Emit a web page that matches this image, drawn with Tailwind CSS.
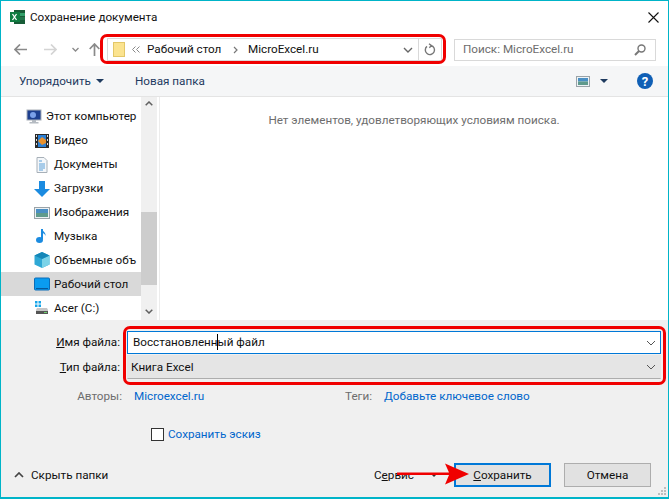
<!DOCTYPE html>
<html lang="ru">
<head>
<meta charset="utf-8">
<script src="https://cdn.jsdelivr.net/npm/@tailwindcss/browser@4"></script>
</head>
<body class="m-0 bg-white">
<div class="relative w-[669px] h-[499px] flex flex-col overflow-hidden border-x border-t border-b-2 border-[#00b4c8] bg-white text-[11.7px] leading-[13px] text-[#111] font-['Roboto','Noto_Sans',sans-serif]">
  <!-- title -->
  <div class="h-[32px] shrink-0 flex items-center pl-[8px] pr-[9px]">
    <svg class="w-[17px] h-[16px] shrink-0" viewBox="0 0 17 16"><rect x="5" y="1" width="11" height="14" fill="#185c37"/><rect x="10" y="4" width="6" height="3" fill="#33a06a"/><rect x="10" y="8" width="6" height="3" fill="#21754a"/><rect x="1" y="3" width="10" height="10" fill="#107c41"/><path d="M3.500 5l4 6M7.500 5l-4 6" stroke="#fff" stroke-width="1.300"/></svg>
    <span class="ml-[4px] text-[#111]">Сохранение документа</span>
    <svg class="ml-auto w-[11px] h-[11px]" viewBox="0 0 11 11"><path d="M.5.5l10 10M10.500.5l-10 10" stroke="#111" stroke-width="1.100" fill="none"/></svg>
  </div>
  <!-- nav -->
  <div class="h-[33px] shrink-0 flex items-center">
    <div class="w-[106px] shrink-0 flex items-center h-full relative">
      <svg class="ml-[13px] w-[13px] h-[11px]" viewBox="0 0 13 11"><path d="M6 .5L1 5.500l5 5M1 5.500h12" stroke="#8a8a8a" stroke-width="1.700" fill="none"/></svg>
      <svg class="ml-[17px] w-[13px] h-[11px]" viewBox="0 0 13 11"><path d="M7 .5l5 5-5 5M12 5.500H0" stroke="#d4d4d4" stroke-width="1.700" fill="none"/></svg>
      <svg class="ml-[15px] w-[7px] h-[5px]" viewBox="0 0 7 5"><path d="M.5 1l3 3 3-3" stroke="#8a8a8a" stroke-width="1.300" fill="none"/></svg>
      <svg class="ml-[10px] w-[11px] h-[13px]" viewBox="0 0 11 13"><path d="M.7 6l4.800-5 4.800 5M5.500 1v12" stroke="#8a8a8a" stroke-width="1.700" fill="none"/></svg>
    </div>
    <div class="w-[335px] h-[23px] shrink-0 border border-[#d9d9d9] flex items-center">
      <div class="w-[12px] h-[15px] ml-[5px] bg-[#fbe38f] border border-[#e3c768]"></div>
      <svg class="ml-[7px] w-[8px] h-[7px]" viewBox="0 0 8 7"><path d="M3.500.5l-3 3 3 3M7.500.5l-3 3 3 3" stroke="#888" fill="none"/></svg>
      <span class="ml-[7px] w-[84px] whitespace-nowrap">Рабочий стол</span>
      <svg class="ml-[2px] w-[5px] h-[8px]" viewBox="0 0 5 8"><path d="M1 1l3 3-3 3" stroke="#777" stroke-width="1.200" fill="none"/></svg>
      <span class="ml-[10px]">MicroExcel.ru</span>
      <svg class="ml-auto w-[10px] h-[6px]" viewBox="0 0 10 6"><path d="M1 1l4 4 4-4" stroke="#666" stroke-width="1.400" fill="none"/></svg>
      <div class="ml-[5px] w-px h-full bg-[#d9d9d9]"></div>
      <svg class="mx-[5px] w-[12px] h-[13px]" viewBox="0 0 12 13"><path d="M7 2.500A4.600 4.600 0 1 1 3 3.400M5 .8L7.500 2.600 5.300 4.700" stroke="#777" stroke-width="1.400" fill="none"/></svg>
    </div>
    <div class="ml-[12px] w-[202px] h-[22px] shrink-0 border border-[#d9d9d9] flex items-center pl-[8px] pr-[9px] text-[#6d6d6d]">
      <span>Поиск: MicroExcel.ru</span>
      <svg class="ml-auto w-[12px] h-[12px]" viewBox="0 0 12 12"><circle cx="7.500" cy="4.500" r="3.500" stroke="#777" stroke-width="1.400" fill="none"/><path d="M5 7l-4 4" stroke="#777" stroke-width="2"/></svg>
    </div>
  </div>
  <!-- toolbar -->
  <div class="h-[31px] shrink-0 bg-[#f5f6f7] border-b border-[#e4e4e4] flex items-center text-[#1e3a5f]">
    <span class="ml-[18px] w-[72px] whitespace-nowrap">Упорядочить</span>
    <svg class="ml-[5px] w-[8px] h-[4px]" viewBox="0 0 8 4"><path d="M0 0h8L4 4z" fill="#1e3a5f"/></svg>
    <span class="ml-[31px]">Новая папка</span>
    <svg class="ml-auto w-[14px] h-[11px]" viewBox="0 0 14 11"><rect x=".5" y=".5" width="13" height="10" fill="#eef3f6" stroke="#9aa3a8"/><rect x="2" y="2" width="10" height="3.500" fill="#4a8fc4"/><rect x="2" y="5.500" width="10" height="3.500" fill="#5f9a8c"/></svg>
    <svg class="ml-[10px] w-[8px] h-[4px]" viewBox="0 0 8 4"><path d="M0 0h8L4 4z" fill="#1e3a5f"/></svg>
    <div class="ml-[29px] mr-[15px] w-[16px] h-[16px] rounded-full bg-[#0f5fb5] flex items-center justify-center text-white font-bold text-[13px]">?</div>
  </div>
  <!-- body -->
  <div class="h-[223px] shrink-0 flex">
    <div class="w-[140px] shrink-0 overflow-hidden flex flex-col pt-[8px]">
      <div class="h-[24px] flex items-center pl-[25px] whitespace-nowrap">
        <svg class="w-[16px] h-[16px] shrink-0" viewBox="0 0 16 16"><rect x="1" y="1" width="14" height="10" fill="#1d3f8f" stroke="#a9b0b8"/><circle cx="7" cy="6" r="3" fill="#7aa0e8"/><path d="M6 11h4v2H6zM3.500 13h9v1.500h-9z" fill="#b5bbc2"/></svg>
        <span class="ml-[4px]">Этот компьютер</span>
      </div>
      <div class="h-[24px] flex items-center pl-[33px] whitespace-nowrap">
        <svg class="w-[16px] h-[16px] shrink-0" viewBox="0 0 16 16"><rect x="1" y="1" width="14" height="14" fill="#2a2a2a"/><path d="M2 2h1v2H2zM2 6h1v2H2zM2 10h1v2H2zM13 2h1v2h-1zM13 6h1v2h-1zM13 10h1v2h-1z" fill="#ddd"/><rect x="4" y="2" width="8" height="12" fill="#2b7fd4"/><path d="M4 8l4-4 4 3v3l-4 2z" fill="#e8912d"/></svg>
        <span class="ml-[4px]">Видео</span>
      </div>
      <div class="h-[24px] flex items-center pl-[33px] whitespace-nowrap">
        <svg class="w-[16px] h-[16px] shrink-0" viewBox="0 0 16 16"><path d="M3 .5h7l3 3v12H3z" fill="#f4f7fa" stroke="#a7b0b8"/><path d="M5 4h3M5 7h6M5 9h6M5 11h6M5 13h4" stroke="#5aa0d8"/></svg>
        <span class="ml-[4px]">Документы</span>
      </div>
      <div class="h-[24px] flex items-center pl-[33px] whitespace-nowrap">
        <svg class="w-[16px] h-[16px] shrink-0" viewBox="0 0 16 16"><path d="M5 0h6v8h5l-8 8-8-8h5z" fill="#1b8be0"/></svg>
        <span class="ml-[4px]">Загрузки</span>
      </div>
      <div class="h-[24px] flex items-center pl-[33px] whitespace-nowrap">
        <svg class="w-[16px] h-[16px] shrink-0" viewBox="0 0 16 16"><rect x=".5" y="2.500" width="15" height="11" fill="#edf1f4" stroke="#9aa3a8"/><rect x="2" y="4" width="12" height="4" fill="#4a8fc4"/><rect x="2" y="8" width="12" height="4" fill="#5f9a8c"/></svg>
        <span class="ml-[4px]">Изображения</span>
      </div>
      <div class="h-[24px] flex items-center pl-[33px] whitespace-nowrap">
        <svg class="w-[16px] h-[16px] shrink-0" viewBox="0 0 16 16"><path d="M8 1v10.500" stroke="#1b8be0" stroke-width="2"/><ellipse cx="5.500" cy="12" rx="3.500" ry="3" fill="#1b8be0"/><path d="M8 1c1 3 4 3 3.500 7-.5-2-2-3-3.500-3z" fill="#1b8be0"/></svg>
        <span class="ml-[4px]">Музыка</span>
      </div>
      <div class="h-[24px] flex items-center pl-[33px] whitespace-nowrap">
        <svg class="w-[16px] h-[16px] shrink-0" viewBox="0 0 16 16"><path d="M8 0l7.500 3.500v9L8 16 .5 12.500v-9z" fill="#2fa8d5"/><path d="M8 7l7.500-3.500v9L8 16z" fill="#7bd3e8"/><path d="M8 0l7.500 3.500L8 7 .5 3.500z" fill="#1587b8"/></svg>
        <span class="ml-[4px]">Объемные объ</span>
      </div>
      <div class="h-[24px] flex items-center pl-[33px] whitespace-nowrap bg-[#d9d9d9]">
        <svg class="w-[16px] h-[16px] shrink-0" viewBox="0 0 16 16"><rect x=".5" y="2" width="15" height="12" rx="1" fill="#0a9cf0" stroke="#0a6db8"/><path d="M2 12.500h12" stroke="#08589a"/></svg>
        <span class="ml-[4px]">Рабочий стол</span>
      </div>
      <div class="h-[24px] flex items-center pl-[33px] whitespace-nowrap">
        <svg class="w-[16px] h-[16px] shrink-0" viewBox="0 0 16 16"><path d="M1 1h2.500v2.500H1zM4.500 1H7v2.500H4.500zM1 4.500h2.500V7H1zM4.500 4.500H7V7H4.500z" fill="#18a5e8"/><path d="M2 10l1-2h10l1 2v4H2z" fill="#c6c6c6"/><rect x="2" y="11" width="12" height="3" fill="#555"/><path d="M10 12.500h3" stroke="#6fd06f"/></svg>
        <span class="ml-[4px]">Acer (C:)</span>
      </div>
    </div>
    <div class="w-[16px] shrink-0 bg-[#f0f0f0] flex flex-col items-center">
      <svg class="mt-[4px] w-[8px] h-[5px] shrink-0" viewBox="0 0 8 5"><path d="M.7 4.300L4 1l3.300 3.300" stroke="#606060" stroke-width="1.500" fill="none"/></svg>
      <div class="mt-[106px] w-full h-[73px] shrink-0 bg-[#cdcdcd]"></div>
      <svg class="mt-[24px] w-[8px] h-[5px] shrink-0" viewBox="0 0 8 5"><path d="M.7.7L4 4 7.300.7" stroke="#606060" stroke-width="1.500" fill="none"/></svg>
    </div>
    <div class="ml-[2px] w-px bg-[#ececec]"></div>
    <div class="flex-1 flex justify-center pt-[17px] text-[#6d6d6d]"><span>Нет элементов, удовлетворяющих условиям поиска.</span></div>
  </div>
  <!-- bottom -->
  <div class="flex-1 bg-[#f0f0f0] flex flex-col">
    <div class="h-[11px] shrink-0"></div>
    <div class="h-[23px] shrink-0 flex items-center">
      <div class="w-[119px] text-right shrink-0"><span class="underline">И</span>мя файла:</div>
      <div class="ml-[7px] w-[534px] h-full border border-[#0078d7] bg-white flex items-center pl-[5px] pr-[4px]">
        <span class="relative">Восстановленный файл<span class="absolute left-[84px] -top-[2px] w-px h-[16px] bg-black"></span></span>
        <svg class="ml-auto w-[10px] h-[6px]" viewBox="0 0 10 6"><path d="M1 1l4 4 4-4" stroke="#555" fill="none"/></svg>
      </div>
    </div>
    <div class="h-[24px] shrink-0 flex items-center mt-[1px]">
      <div class="w-[119px] text-right shrink-0"><span class="underline">Т</span>ип файла:</div>
      <div class="ml-[7px] w-[534px] h-full border border-[#adadad] border-t-[#e5e5e5] border-x-[#e5e5e5] bg-[#e5e5e5] flex items-center pl-[3px] pr-[4px]">
        <span>Книга Excel</span>
        <svg class="ml-auto w-[10px] h-[6px]" viewBox="0 0 10 6"><path d="M1 1l4 4 4-4" stroke="#555" fill="none"/></svg>
      </div>
    </div>
    <div class="h-[17px] shrink-0 mt-[9px] flex items-center">
      <div class="w-[121px] text-right shrink-0 text-[#6d6d6d]">Авторы:</div>
      <a class="ml-[12px] w-[211px] text-[#0066cc]">Microexcel.ru</a>
      <span class="w-[39px] text-[#6d6d6d]">Теги:</span>
      <a class="text-[#0066cc]">Добавьте ключевое слово</a>
    </div>
    <div class="h-[14px] shrink-0 mt-[22px] flex items-center pl-[150px]">
      <div class="w-[13px] h-[13px] border border-[#333] bg-white"></div>
      <span class="ml-[4px] text-[#0066cc]">Сохранить эскиз</span>
    </div>
    <div class="h-[24px] shrink-0 mt-[22px] flex items-center">
      <svg class="ml-[13px] w-[10px] h-[6px]" viewBox="0 0 10 6"><path d="M1 5l4-4 4 4" stroke="#444" stroke-width="1.700" fill="none"/></svg>
      <span class="ml-[7px] w-[343px]">Скрыть папки</span>
      <span class="w-[56px]">С<span class="underline">е</span>рвис</span>
      <svg class="w-[8px] h-[4px]" viewBox="0 0 8 4"><path d="M0 0h8L4 4z" fill="#333"/></svg>
      <div class="ml-[16px] w-[97px] h-full border-2 border-[#0078d7] bg-[#e1e1e1] flex items-center justify-center"><span><span class="underline">С</span>охранить</span></div>
      <div class="ml-[13px] w-[87px] h-full border border-[#adadad] bg-[#e1e1e1] flex items-center justify-center">Отмена</div>
    </div>
  </div>
  <!-- grip -->
  <svg class="absolute right-[1px] bottom-[1px] w-[10px] h-[10px]" viewBox="0 0 10 10"><path d="M7 1h2v2H7zM4 4h2v2H4zM7 4h2v2H7zM1 7h2v2H1zM4 7h2v2H4zM7 7h2v2H7z" fill="#bdbdbd"/></svg>
  <!-- annotations -->
  <div class="absolute left-[99px] top-[33px] w-[346px] h-[30px] rounded-[7px] border-[3px] border-[#f00000]"></div>
  <div class="absolute left-[122px] top-[325px] w-[543px] h-[59px] rounded-[7px] border-[3px] border-[#f00000]"></div>
  <svg class="absolute left-[396px] top-[462px] w-[72px] h-[22px]" viewBox="0 0 72 22"><path d="M0 9.500h52l-4-9 24 10.500-24 10.500 4-9.500H0z" fill="#f00000"/></svg>
</div>
</body>
</html>
